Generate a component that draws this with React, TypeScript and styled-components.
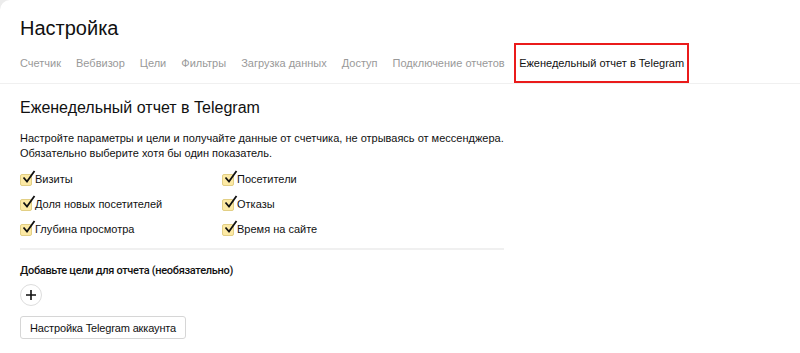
import React from 'react';
import styled, { createGlobalStyle } from 'styled-components';

const GlobalStyle = createGlobalStyle`
  html, body {
    margin: 0;
    padding: 0;
    background: #ececec;
  }
  body {
    font-family: "Liberation Sans", Arial, sans-serif;
    color: #000;
  }
`;

const Page = styled.div`
  background: #fff;
  min-height: 353px;
  border-top-left-radius: 10px;
  overflow: hidden;
`;

const Header = styled.div`
  padding: 16px 0 0 20px;
  border-bottom: 1px solid #f0f0f0;
`;

const Title = styled.h1`
  margin: 0;
  font-size: 20px;
  font-weight: normal;
  line-height: 24px;
  color: #111;
`;

const Tabs = styled.nav`
  display: flex;
  align-items: stretch;
  height: 40px;
  margin-top: 3px;
  margin-left: -7.5px;
`;

const Tab = styled.div<{ $active?: boolean }>`
  display: flex;
  align-items: center;
  padding: 0 ${(p) => (p.$active ? '3px' : '7.5px')};
  margin: 0 ${(p) => (p.$active ? '2px' : '0')};
  border: ${(p) => (p.$active ? '2px solid #ea1b1b' : 'none')};
  box-sizing: border-box;
  font-size: 11px;
  color: ${(p) => (p.$active ? '#111' : '#999')};
  white-space: nowrap;
`;

const Content = styled.div`
  padding: 14px 20px 0;
  width: 484px;
`;

const Heading = styled.h2`
  margin: 0;
  font-size: 16px;
  font-weight: normal;
  line-height: 20px;
  color: #111;
`;

const Text = styled.p`
  margin: 13px 0 0;
  font-size: 11px;
  line-height: 15px;
  color: #111;
  white-space: nowrap;
`;

const Checks = styled.div`
  display: grid;
  grid-template-columns: 202px 1fr;
  grid-auto-rows: 25px;
  margin-top: 5px;
`;

const CheckItem = styled.label`
  display: flex;
  align-items: center;
  gap: 3px;
  font-size: 11px;
  color: #111;
`;

const Box = styled.span`
  position: relative;
  display: inline-block;
  width: 12px;
  height: 12px;
  border-radius: 2px;
  background: #fce9a4;
  border: 1px solid #e2cf85;
  box-sizing: border-box;
  margin-top: 2px;

  svg {
    position: absolute;
    left: 1px;
    top: -5px;
  }
`;

const Divider = styled.div`
  height: 2px;
  background: #f0f0f0;
  margin-top: 7px;
`;

const SubHeading = styled.div`
  margin-top: 13px;
  font-family: Roboto, "Liberation Sans", sans-serif;
  font-size: 11px;
  font-weight: 500;
  letter-spacing: -0.3px;
  color: #111;
  line-height: 15px;
`;

const PlusButton = styled.button`
  display: flex;
  align-items: center;
  justify-content: center;
  width: 22px;
  height: 22px;
  margin-top: 6px;
  padding: 0;
  border-radius: 50%;
  border: 1px solid #ddd;
  background: #fff;
`;

const Button = styled.button`
  margin-top: 10px;
  height: 23px;
  padding: 0 9px;
  border: 1px solid #d6d6d6;
  border-radius: 3px;
  background: #fff;
  font-family: inherit;
  font-size: 11px;
  letter-spacing: -0.15px;
  color: #111;
`;

const tabs = [
  'Счетчик',
  'Вебвизор',
  'Цели',
  'Фильтры',
  'Загрузка данных',
  'Доступ',
  'Подключение отчетов',
  'Еженедельный отчет в Telegram',
];

const metrics = [
  'Визиты',
  'Посетители',
  'Доля новых посетителей',
  'Отказы',
  'Глубина просмотра',
  'Время на сайте',
];

const Check = ({ label }: { label: string }) => (
  <CheckItem>
    <Box>
      <svg width="14" height="14" viewBox="0 0 14 14">
        <path d="M1.5 7.5 L5 11.5 L12.5 1" fill="none" stroke="#111" strokeWidth="1.8" />
      </svg>
    </Box>
    {label}
  </CheckItem>
);

export default function App() {
  return (
    <>
      <GlobalStyle />
      <Page>
        <Header>
          <Title>Настройка</Title>
          <Tabs>
            {tabs.map((t, i) => (
              <Tab key={t} $active={i === tabs.length - 1}>
                {t}
              </Tab>
            ))}
          </Tabs>
        </Header>
        <Content>
          <Heading>Еженедельный отчет в Telegram</Heading>
          <Text>
            Настройте параметры и цели и получайте данные от счетчика, не отрываясь от мессенджера.
            <br />
            Обязательно выберите хотя бы один показатель.
          </Text>
          <Checks>
            {metrics.map((m) => (
              <Check key={m} label={m} />
            ))}
          </Checks>
          <Divider />
          <SubHeading>Добавьте цели для отчета (необязательно)</SubHeading>
          <PlusButton>
            <svg width="12" height="12" viewBox="0 0 12 12">
              <path d="M6 1 V11 M1 6 H11" stroke="#111" strokeWidth="1.6" />
            </svg>
          </PlusButton>
          <Button>Настройка Telegram аккаунта</Button>
        </Content>
      </Page>
    </>
  );
}
